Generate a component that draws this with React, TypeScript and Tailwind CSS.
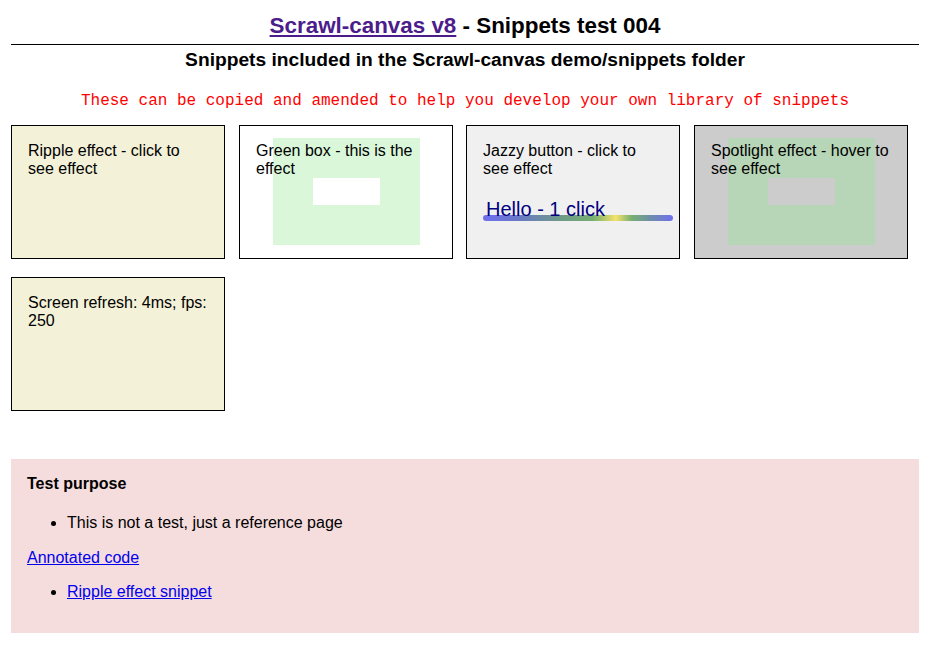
import React from 'react';

const box = 'relative w-[214px] h-[134px] border border-black px-4 pt-[16px] text-[16px] leading-[18px] text-black';

function EffectArea({ outer, inner }: { outer: string; inner: string }) {
  // drawn effect layer, sits behind the caption
  return (
    <div className={`absolute left-[33px] top-[12px] w-[147px] h-[107px] ${outer}`}>
      <div className={`absolute left-[40px] top-[40px] w-[67px] h-[27px] ${inner}`} />
    </div>
  );
}

export default function App() {
  return (
    <div className="min-h-[647px] bg-white pl-[11px] pr-[12px] font-['Liberation_Sans',Arial,sans-serif] text-black">
      <h1 className="pt-[13px] pb-[5px] text-center text-[22.4px] font-bold leading-[26px]">
        <a href="#" className="text-[#4c1d8a] underline">Scrawl-canvas v8</a> - Snippets test 004
      </h1>
      <div className="h-px bg-black" />
      <h2 className="mt-[4px] text-center text-[19.2px] font-bold leading-[22px]">
        Snippets included in the Scrawl-canvas demo/snippets folder
      </h2>
      <p className="mt-[21px] text-center font-['Liberation_Mono','Courier_New',monospace] text-[16px] leading-[18px] text-[#ff0000]">
        These can be copied and amended to help you develop your own library of snippets
      </p>

      <div className="mt-[15px] flex gap-[14px]">
        <div className={`${box} bg-[#f3f1d8]`}>
          <span className="relative">Ripple effect - click to see effect</span>
        </div>
        <div className={`${box} bg-white`}>
          <EffectArea outer="bg-[#daf7da]" inner="bg-white" />
          <span className="relative">Green box - this is the effect</span>
        </div>
        <div className={`${box} -ml-px bg-[#f0f0f0]`}>
          <span className="relative">Jazzy button - click to see effect</span>
          <div className="mt-[21px] ml-[3px] text-[20px] leading-[20px] text-[#000080]">Hello - 1 click</div>
          <div className="-mt-[4px] h-[6px] w-[190px] rounded-full bg-[linear-gradient(90deg,#6f6ff0_0%,#6a78c8_18%,#6e9a8a_40%,#76b070_58%,#f5e36a_70%,#78b072_78%,#6e8fa8_88%,#6f6ff0_100%)]" />
        </div>
        <div className={`${box} bg-[#cccccc]`}>
          <EffectArea outer="bg-[#b7d6b7]" inner="bg-[#cccccc]" />
          <span className="relative">Spotlight effect - hover to see effect</span>
        </div>
      </div>

      <div className="mt-[18px] flex">
        <div className={`${box} bg-[#f3f1d8]`}>
          Screen refresh: 4ms; fps: 250
        </div>
      </div>

      <div className="mt-[48px] bg-[#f5dcdd] px-4 pt-[16px] pb-[32px] text-[16px] leading-[18px]">
        <h3 className="font-bold">Test purpose</h3>
        <ul className="mt-[21px] list-disc pl-10">
          <li>This is not a test, just a reference page</li>
        </ul>
        <p className="mt-[17px]">
          <a href="#" className="text-[#0000ee] underline">Annotated code</a>
        </p>
        <ul className="mt-[16px] list-disc pl-10">
          <li>
            <a href="#" className="text-[#0000ee] underline">Ripple effect snippet</a>
          </li>
        </ul>
      </div>
    </div>
  );
}
